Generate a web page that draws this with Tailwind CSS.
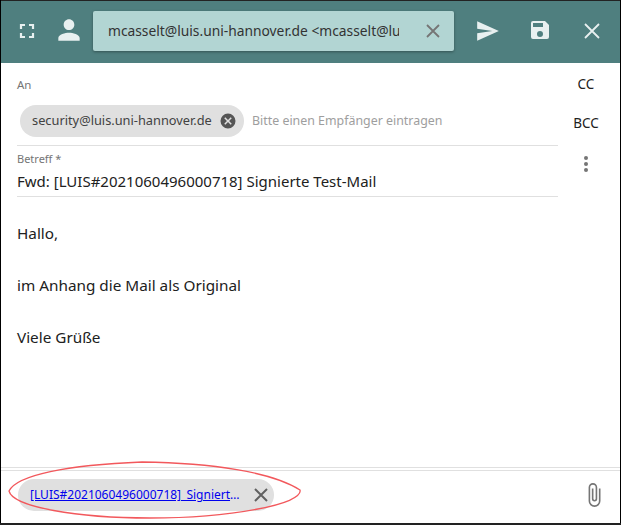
<!DOCTYPE html>
<html lang="en">
<head>
    <meta charset="UTF-8">
    <title>Mail</title>
    <script src="https://cdn.jsdelivr.net/npm/@tailwindcss/browser@4"></script>
</head>
<body class="bg-white overflow-hidden">
    <div class="relative w-[621px] h-[525px] flex flex-col border-x border-black font-['Noto_Sans',sans-serif] text-[#212121]">
        <!-- toolbar -->
        <div class="h-[63px] shrink-0 bg-[#4f7f7f] border-t border-[#222] flex items-start pt-[10px]">
            <svg class="w-[24px] h-[24px] ml-[14px] mt-[8px]" viewBox="0 0 24 24" fill="none" stroke="#e8f0f0" stroke-width="2.2"><path d="M6 10V6h4M14 6h4v4M18 14v4h-4M10 18H6v-4"/></svg>
            <svg class="w-[32px] h-[32px] ml-[14px] mt-[3px]" viewBox="0 0 24 24" fill="#e8f0f0"><path d="M12 12c2.200 0 4-1.800 4-4s-1.800-4-4-4-4 1.800-4 4 1.800 4 4 4zm0 2c-2.700 0-8 1.300-8 4v2h16v-2c0-2.700-5.300-4-8-4z"/></svg>
            <div class="ml-[8px] w-[361px] h-[40px] bg-[#b2d5d3] rounded-[2px] shadow-[0_1px_3px_rgba(0,0,0,0.35)] flex items-center pl-[15px]">
                <span class="w-[291px] overflow-hidden whitespace-nowrap text-[13.800px] text-[#333]">mcasselt@luis.uni-hannover.de &lt;mcasselt@luis.uni-hannover.de&gt;</span>
                <svg class="w-[24px] h-[24px] ml-[22px]" viewBox="0 0 24 24" fill="none" stroke="#757575" stroke-width="1.800"><path d="M6 6l12 12M18 6L6 18"/></svg>
            </div>
            <svg class="w-[26px] h-[26px] ml-[21px] mt-[7px]" viewBox="0 0 24 24" fill="#e8f0f0"><path d="M2 21l20-9L2 3v7l14 2-14 2z"/></svg>
            <svg class="w-[24px] h-[24px] ml-[27px] mt-[7px]" viewBox="0 0 24 24" fill="#e8f0f0"><path d="M17 3H5a2 2 0 0 0-2 2v14a2 2 0 0 0 2 2h14a2 2 0 0 0 2-2V7l-4-4zm-5 16a3 3 0 1 1 0-6 3 3 0 0 1 0 6zm3-10H5V5h10v4z"/></svg>
            <svg class="w-[24px] h-[24px] ml-[28px] mt-[8px]" viewBox="0 0 24 24" fill="none" stroke="#e8f0f0" stroke-width="1.800"><path d="M5 5l14 14M19 5L5 19"/></svg>
        </div>

        <!-- fields -->
        <div class="flex shrink-0">
            <div class="w-[541px] ml-[16px]">
                <div class="text-[11.500px] text-[#757575] mt-[15px] leading-[14px]">An</div>
                <div class="flex items-center mt-[13px] h-[32px]">
                    <div class="ml-[3px] h-[32px] w-[224px] rounded-full bg-[#e0e0e0] flex items-center pl-[12px]">
                        <span class="text-[12.800px] text-[#424242] whitespace-nowrap w-[186px]">security@luis.uni-hannover.de</span>
                        <svg class="w-[18px] h-[18px] ml-[1px]" viewBox="0 0 24 24"><path fill="#555" d="M12 2a10 10 0 1 0 0 20 10 10 0 0 0 0-20zm5 13.600L15.600 17 12 13.400 8.400 17 7 15.600 10.600 12 7 8.400 8.400 7 12 10.600 15.600 7 17 8.400 13.400 12z"/></svg>
                    </div>
                    <span class="ml-[8px] text-[12.400px] text-[#9e9e9e] whitespace-nowrap">Bitte einen Empfänger eintragen</span>
                </div>
                <div class="mt-[8px] border-t border-[#e0e0e0] pt-[6px]">
                    <div class="text-[11px] text-[#757575] leading-[14px]">Betreff *</div>
                    <div class="text-[15px] leading-[22px] mt-[4px] whitespace-nowrap">Fwd: [LUIS#2021060496000718] Signierte Test-Mail</div>
                </div>
                <div class="mt-[4px] border-t border-[#e0e0e0]"></div>
            </div>
            <div class="flex-1 flex flex-col items-center text-[13.500px] pr-[6px]">
                <span class="mt-[11px] leading-[20px]">CC</span>
                <span class="mt-[19px] leading-[20px]">BCC</span>
                <svg class="w-[24px] h-[24px] mt-[19px]" viewBox="0 0 24 24" fill="#757575"><circle cx="12" cy="6" r="2"/><circle cx="12" cy="12" r="2"/><circle cx="12" cy="18" r="2"/></svg>
            </div>
        </div>

        <!-- body -->
        <div class="flex-1 pl-[16px] pt-[23px] text-[15.300px] leading-[26px]">
            <p>Hallo,</p>
            <p class="mt-[26px]">im Anhang die Mail als Original</p>
            <p class="mt-[26px]">Viele Grüße</p>
        </div>

        <!-- attachments -->
        <div class="shrink-0 h-[58px] border-t border-[#e0e0e0] pt-[2px]">
            <div class="border-t border-[#e0e0e0] h-full flex items-start pl-[17px] pt-[8px]">
                <div class="h-[32px] w-[256px] rounded-full bg-[#e0e0e0] flex items-center pl-[12px]">
                    <a class="w-[211px] truncate text-[12px] text-[#0000ee] underline">[LUIS#2021060496000718]_Signierte Test-Mail.eml</a>
                    <svg class="w-[24px] h-[24px] ml-[8px]" viewBox="0 0 24 24" fill="none" stroke="#616161" stroke-width="2"><path d="M6 6l12 12M18 6L6 18"/></svg>
                </div>
                <svg class="w-[26px] h-[26px] ml-auto mr-[13px] mt-[3px]" viewBox="0 0 24 24" fill="#757575"><path d="M16.500 6v11.500a4 4 0 0 1-8 0V5a2.500 2.500 0 0 1 5 0v10.500a1 1 0 0 1-2 0V6H10v9.500a2.500 2.500 0 0 0 5 0V5a4 4 0 0 0-8 0v12.500a5.500 5.500 0 0 0 11 0V6h-1.500z"/></svg>
            </div>
        </div>

        <!-- hand drawn marker -->
        <svg class="absolute left-[6px] top-[459px] pointer-events-none" width="300" height="64" viewBox="0 0 300 64" fill="none" stroke="#f2585c" stroke-width="1.300"><path d="M2 32C10 16 60 6 135 3c70 1 130 10 158 28 4 14-70 28-150 28C70 59 6 48 2 32z"/></svg>

        <div class="absolute left-[-1px] right-[-1px] bottom-0 h-[2px] bg-[#222]"></div>
    </div>
</body>
</html>
